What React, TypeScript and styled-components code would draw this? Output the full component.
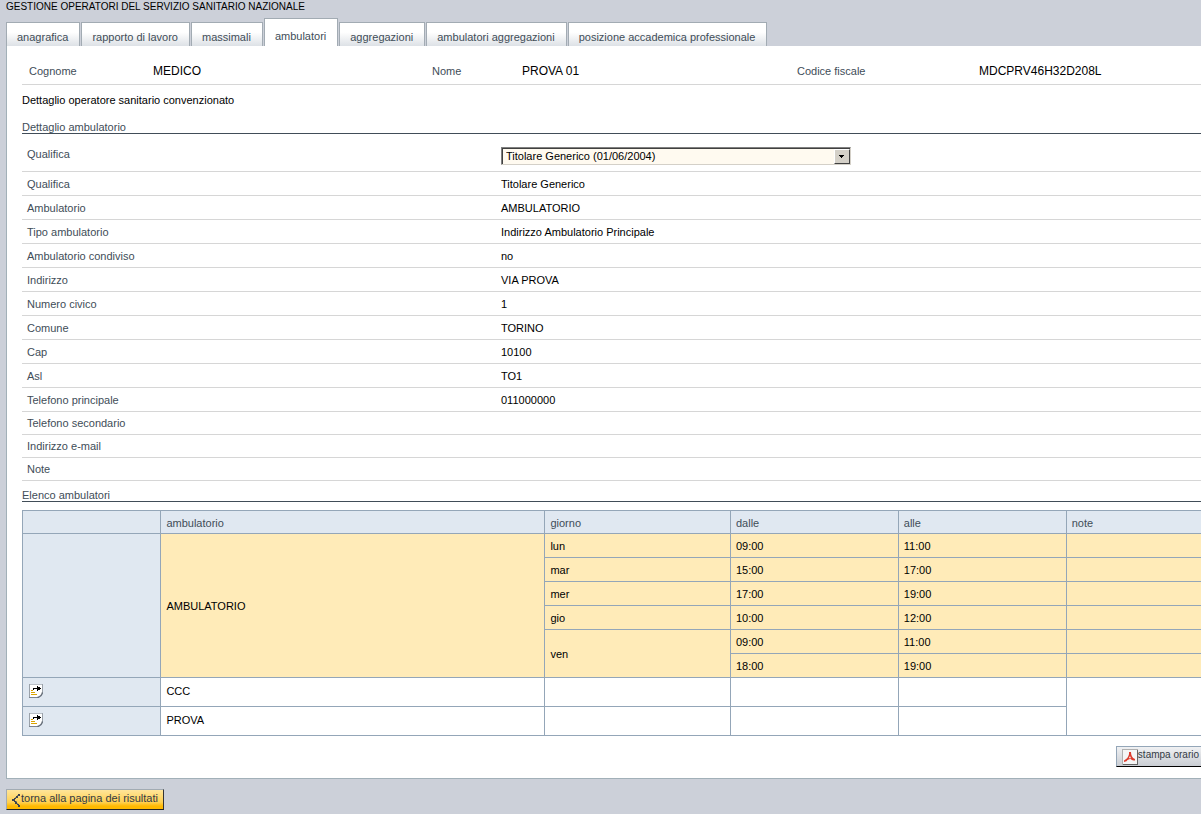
import React from 'react';
import styled, { createGlobalStyle } from 'styled-components';

const ink = '#414d58';
const line = '#d6d6d6';
const grid = '#94a6b8';
const head = '#e0e8f1';
const current = '#ffebb8';

const GlobalStyle = createGlobalStyle`
  * { box-sizing: border-box; }
  body {
    margin: 0;
    background: #ccd0d9;
    color: #000;
    font: 11px/14px "Liberation Sans", Arial, sans-serif;
    overflow-x: hidden;
  }
  button, select { font: inherit; }
`;

const Page = styled.div`
  padding: 0 0 4px 6px;
`;

const PageTitle = styled.h1`
  margin: 0;
  font-size: 10px;
  line-height: 14px;
  font-weight: normal;
`;

const Tabs = styled.nav`
  display: flex;
  align-items: flex-end;
  gap: 1px;
  height: 32px;
`;

const Tab = styled.a<{ $active?: boolean }>`
  height: ${(p) => (p.$active ? 28 : 24)}px;
  padding: ${(p) => (p.$active ? 10 : 7)}px 11px 0 10px;
  border: 1px solid #a2abb3;
  border-bottom: 0;
  background: ${(p) => (p.$active ? '#fff' : 'linear-gradient(#fff 40%, #dde1e6)')};
  color: ${ink};
  text-decoration: none;
  white-space: nowrap;
`;

const Panel = styled.main`
  padding: 0 0 11px 15px;
  border: solid #a2b0b8;
  border-width: 0 0 1px 1px;
  background: #fff;
`;

const Identity = styled.dl`
  display: grid;
  grid-template-columns: 124fr 279fr 90fr 275fr 182fr 229fr;
  align-items: center;
  height: 39px;
  margin: 0;
  padding-top: 11px;
  border-bottom: 1px solid ${line};
`;

const IdentityLabel = styled.dt`
  padding-left: 7px;
  color: ${ink};
`;

const IdentityValue = styled.dd`
  margin: 0;
  padding-left: 7px;
  font-size: 12px;
`;

const Subtitle = styled.h2`
  margin: 0;
  padding: 8px 0 14px;
  font-size: 11px;
  line-height: 14px;
  font-weight: normal;
`;

const SectionTitle = styled.h3`
  margin: 0;
  border-bottom: 1px solid ${ink};
  color: ${ink};
  font-size: 11px;
  line-height: 12px;
  font-weight: normal;
`;

const FieldRow = styled.div<{ $height: number }>`
  display: grid;
  grid-template-columns: 479fr 700fr;
  align-items: center;
  height: ${(p) => p.$height}px;
  border-bottom: 1px solid ${line};
`;

const FieldLabel = styled.dt`
  padding-left: 5px;
  color: ${ink};
`;

const FieldValue = styled.dd`
  margin: 0;
`;

const Fields = styled.dl`
  margin: 0 0 8px;
`;

const SelectRow = styled(FieldRow)`
  padding-top: 7px;
`;

const SelectLabel = styled.label`
  padding: 0 0 5px 5px;
  color: ${ink};
`;

const SelectBox = styled.div`
  position: relative;
  width: 350px;
  height: 18px;
`;

const Select = styled.select`
  display: block;
  width: 100%;
  height: 100%;
  margin: 0;
  padding: 0 20px 0 4px;
  border: 1px solid;
  border-color: #808080 #d4d0c8 #d4d0c8 #808080;
  border-radius: 0;
  box-shadow: inset 1px 1px #404040;
  appearance: none;
  background: #fffaf0;
  color: #000;
`;

const SelectArrow = styled.span`
  position: absolute;
  top: 2px;
  right: 1px;
  display: grid;
  place-items: center;
  width: 16px;
  height: 15px;
  border: 1px solid;
  border-color: #fff #404040 #404040 #fff;
  background: #d4d0c8;
  pointer-events: none;
`;

const Schedule = styled.table`
  width: 100%;
  margin-top: 8px;
  table-layout: fixed;
  border-collapse: separate;
  border-spacing: 0;
  border: solid ${grid};
  border-width: 1px 0 0 1px;
`;

const Column = styled.col<{ $width: string }>`
  width: ${(p) => p.$width};
`;

const HeadCell = styled.th`
  height: 23px;
  padding: 1px 5px 0;
  border: solid ${grid};
  border-width: 0 1px 1px 0;
  background: ${head};
  color: ${ink};
  font-weight: normal;
  text-align: left;
  &:last-child { border-right: 0; }
`;

const Cell = styled.td<{ $tone?: string; $height?: number; $last?: boolean }>`
  height: ${(p) => p.$height ?? 24}px;
  padding: 0 5px;
  border: solid ${grid};
  border-width: 0 ${(p) => (p.$last ? 0 : 1)}px 1px 0;
  background: ${(p) => p.$tone ?? '#fff'};
`;

const IconCell = styled(Cell)`
  padding-left: 6px;
`;

const NameCell = styled(Cell)`
  padding-bottom: 3px;
`;

const IconButton = styled.button`
  display: block;
  margin: 0;
  padding: 0;
  border: 0;
  background: none;
  cursor: pointer;
`;

const PanelActions = styled.div`
  display: flex;
  justify-content: flex-end;
  padding-top: 10px;
`;

const ActionButton = styled.button<{ $primary?: boolean }>`
  display: flex;
  align-items: center;
  height: 21px;
  margin: 0;
  padding: 0 5px;
  border: 1px solid;
  border-color: ${(p) =>
    p.$primary ? '#a2abb3 #333 #222 #a2abb3' : '#94a6b8 #333 #000 #94a6b8'};
  background: ${(p) =>
    p.$primary
      ? 'linear-gradient(#ffe59a, #ffd050 65%, #ffb900 85%, #ffb900)'
      : 'linear-gradient(#f0f1f3, #c9cdd3)'};
  color: #333a44;
  white-space: nowrap;
  cursor: pointer;
`;

const PrintButton = styled(ActionButton)`
  padding-right: 2px;
  border-right: 0;
  font-size: 10px;
`;

const ButtonText = styled.span`
  padding-bottom: 3px;
`;

const Footer = styled.footer`
  padding-top: 10px;
`;

const SelectIcon = () => (
  <svg width="14" height="14" viewBox="0 0 14 14" aria-hidden="true">
    <path d="M0 0h14v9l-5 5H0z" fill="#fff" />
    <path d="M0 0h14v1H0z" fill="#b9bfc6" />
    <path d="M0 0h1v14H0z" fill="#9aa1a9" />
    <path d="M13 0h1v9h-1z" fill="#9aa1a9" />
    <path d="M0 13h9v1H0z" fill="#7c848e" />
    <path d="M13.500 8.500C13 11 11.500 13 8.500 13.500" fill="none" stroke="#656d78" strokeWidth="1.500" />
    <path d="M2 6h2v1H2zM2 8h4v1H2zM2 10h6v1H2z" fill="#dba400" />
    <path d="M4 4h4V2h1v1h2v1h1v1h-1v1H9v1H8V5H5v1H4z" fill="#000" />
  </svg>
);

const PdfIcon = () => (
  <svg width="16" height="16" viewBox="0 0 16 16" aria-hidden="true">
    <path d="M0 0h16v16H0z" fill="#f5f5f5" />
    <path d="M0 0h16v1H1v15H0z" fill="#b0b0b0" />
    <path d="M15 1h1v15H1v-1h14z" fill="#666" />
    <path
      d="M7 3h2c0 3 1 6 4 7v1.500c-2 0-3-.5-4.500-1.500-2 .2-3 .8-4 2.300L2 13v-1.500C5 10 7.500 7 7 3z"
      fill="#dc3b2c"
    />
    <path d="M8 7l-1.200 2.200h2.200z" fill="#f5f5f5" />
  </svg>
);

const BackIcon = () => (
  <svg width="9" height="14" viewBox="0 0 9 14" aria-hidden="true">
    <path
      d="M6 1h2v2H6zM4 3h2v2H4zM2 5h2v1H2zM0 6h3v2H0zM2 8h2v1H2zM3 9h2v2H3zM5 11h2v1H5zM6 12h2v2H6z"
      fill="#3c4450"
    />
    <path d="M5 2h1v1H5zM3 4h1v1H3zM4 8h1v1H4zM5 10h1v1H5z" fill="#8a8468" />
  </svg>
);

const tabs = [
  'anagrafica',
  'rapporto di lavoro',
  'massimali',
  'ambulatori',
  'aggregazioni',
  'ambulatori aggregazioni',
  'posizione accademica professionale',
];

const identity = [
  ['Cognome', 'MEDICO'],
  ['Nome', 'PROVA 01'],
  ['Codice fiscale', 'MDCPRV46H32D208L'],
];

const fields: [string, string][] = [
  ['Qualifica', 'Titolare Generico'],
  ['Ambulatorio', 'AMBULATORIO'],
  ['Tipo ambulatorio', 'Indirizzo Ambulatorio Principale'],
  ['Ambulatorio condiviso', 'no'],
  ['Indirizzo', 'VIA PROVA'],
  ['Numero civico', '1'],
  ['Comune', 'TORINO'],
  ['Cap', '10100'],
  ['Asl', 'TO1'],
  ['Telefono principale', '011000000'],
  ['Telefono secondario', ''],
  ['Indirizzo e-mail', ''],
  ['Note', ''],
];

const hours = [
  { day: 'lun', span: 1, from: '09:00', to: '11:00' },
  { day: 'mar', span: 1, from: '15:00', to: '17:00' },
  { day: 'mer', span: 1, from: '17:00', to: '19:00' },
  { day: 'gio', span: 1, from: '10:00', to: '12:00' },
  { day: 'ven', span: 2, from: '09:00', to: '11:00' },
  { day: '', span: 0, from: '18:00', to: '19:00' },
];

export default function App() {
  return (
    <>
      <GlobalStyle />
      <Page>
        <PageTitle>GESTIONE OPERATORI DEL SERVIZIO SANITARIO NAZIONALE</PageTitle>
        <Tabs>
          {tabs.map((name) => (
            <Tab key={name} href="#" $active={name === 'ambulatori'}>
              {name}
            </Tab>
          ))}
        </Tabs>
        <Panel>
          <Identity>
            {identity.map(([label, value]) => (
              <React.Fragment key={label}>
                <IdentityLabel>{label}</IdentityLabel>
                <IdentityValue>{value}</IdentityValue>
              </React.Fragment>
            ))}
          </Identity>
          <Subtitle>Dettaglio operatore sanitario convenzionato</Subtitle>
          <SectionTitle>Dettaglio ambulatorio</SectionTitle>
          <SelectRow $height={38}>
            <SelectLabel htmlFor="qualifica">Qualifica</SelectLabel>
            <SelectBox>
              <Select id="qualifica">
                <option>Titolare Generico (01/06/2004)</option>
              </Select>
              <SelectArrow>
                <svg width="6" height="3" viewBox="0 0 6 3" aria-hidden="true">
                  <path d="M0 0h5v1H4v1H3v1H2V2H1V1H0z" />
                </svg>
              </SelectArrow>
            </SelectBox>
          </SelectRow>
          <Fields>
            {fields.map(([label, value], i) => (
              <FieldRow key={label + i} $height={value ? 24 : 23}>
                <FieldLabel>{label}</FieldLabel>
                <FieldValue>{value}</FieldValue>
              </FieldRow>
            ))}
          </Fields>
          <SectionTitle>Elenco ambulatori</SectionTitle>
          <Schedule>
            <colgroup>
              <Column $width="11.75%" />
              <Column $width="32.6%" />
              <Column $width="15.75%" />
              <Column $width="14.25%" />
              <Column $width="14.25%" />
              <Column $width="auto" />
            </colgroup>
            <thead>
              <tr>
                <HeadCell />
                <HeadCell>ambulatorio</HeadCell>
                <HeadCell>giorno</HeadCell>
                <HeadCell>dalle</HeadCell>
                <HeadCell>alle</HeadCell>
                <HeadCell>note</HeadCell>
              </tr>
            </thead>
            <tbody>
              {hours.map((h, i) => (
                <tr key={i}>
                  {i === 0 && <Cell rowSpan={6} $tone={head} />}
                  {i === 0 && (
                    <Cell rowSpan={6} $tone={current}>
                      AMBULATORIO
                    </Cell>
                  )}
                  {h.span > 0 && (
                    <Cell rowSpan={h.span} $tone={current}>
                      {h.day}
                    </Cell>
                  )}
                  <Cell $tone={current}>{h.from}</Cell>
                  <Cell $tone={current}>{h.to}</Cell>
                  <Cell $tone={current} $last />
                </tr>
              ))}
              {['CCC', 'PROVA'].map((name, i) => (
                <tr key={name}>
                  <IconCell $tone={head} $height={29}>
                    <IconButton type="button" aria-label={`Seleziona ${name}`}>
                      <SelectIcon />
                    </IconButton>
                  </IconCell>
                  <NameCell $height={29}>{name}</NameCell>
                  <Cell $height={29} />
                  <Cell $height={29} />
                  <Cell $height={29} />
                  {i === 0 && <Cell rowSpan={2} $last />}
                </tr>
              ))}
            </tbody>
          </Schedule>
          <PanelActions>
            <PrintButton type="button">
              <PdfIcon />
              <ButtonText>stampa orario</ButtonText>
            </PrintButton>
          </PanelActions>
        </Panel>
        <Footer>
          <ActionButton type="button" $primary>
            <BackIcon />
            <ButtonText>torna alla pagina dei risultati</ButtonText>
          </ActionButton>
        </Footer>
      </Page>
    </>
  );
}
